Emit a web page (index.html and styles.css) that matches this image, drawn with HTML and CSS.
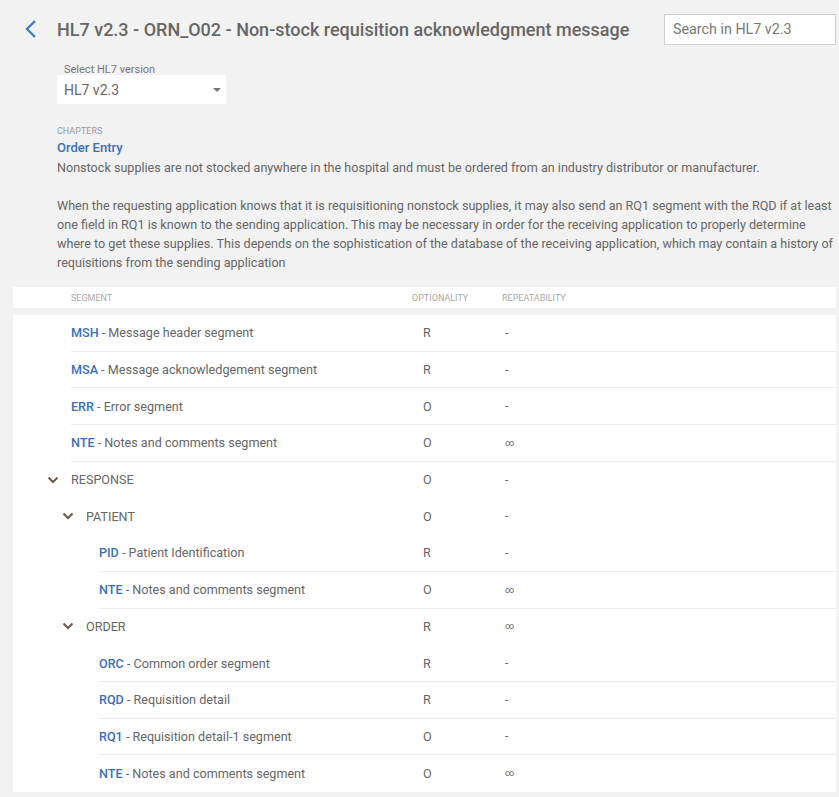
FILE: index.html
```html
<!DOCTYPE html>
<html>
<head>
<meta charset="utf-8">
<link rel="stylesheet" href="styles.css">
</head>
<body>
<header class="top">
  <a class="back" href="#"><svg width="14" height="20" viewBox="0 0 14 20"><path d="M11 2 L3 10 L11 18" fill="none" stroke="#3f7ec6" stroke-width="2.4"/></svg></a>
  <h1 class="title">HL7 v2.3 - ORN_O02 - Non-stock requisition acknowledgment message</h1>
  <input class="search" type="text" placeholder="Search in HL7 v2.3">
</header>

<div class="version">
  <div class="version-label">Select HL7 version</div>
  <div class="select"><span>HL7 v2.3</span><span class="caret"></span></div>
</div>

<section class="chapter">
  <div class="chapter-label">Chapters</div>
  <div class="chapter-name">Order Entry</div>
  <p class="desc">Nonstock supplies are not stocked anywhere in the hospital and must be ordered from an industry distributor or manufacturer.</p>
  <p class="desc">When the requesting application knows that it is requisitioning nonstock supplies, it may also send an RQ1 segment with the RQD if at least one field in RQ1 is known to the sending application. This may be necessary in order for the receiving application to properly determine where to get these supplies. This depends on the sophistication of the database of the receiving application, which may contain a history of requisitions from the sending application</p>
</section>

<div class="thead">
  <div class="th th-seg">Segment</div>
  <div class="th th-opt">Optionality</div>
  <div class="th th-rep">Repeatability</div>
</div>

<div class="tbody">
  <div class="row seg l0"><div class="name"><b>MSH</b> - Message header segment</div><div class="opt">R</div><div class="rep">-</div></div>
  <div class="row seg l0"><div class="name"><b>MSA</b> - Message acknowledgement segment</div><div class="opt">R</div><div class="rep">-</div></div>
  <div class="row seg l0"><div class="name"><b>ERR</b> - Error segment</div><div class="opt">O</div><div class="rep">-</div></div>
  <div class="row seg l0"><div class="name"><b>NTE</b> - Notes and comments segment</div><div class="opt">O</div><div class="rep inf">∞</div></div>
  <div class="row grp g0"><div class="name"><svg class="chev" width="12" height="8" viewBox="0 0 12 8"><path d="M1.5 1.5 L6 6 L10.5 1.5" fill="none" stroke="#6b5a4a" stroke-width="2"/></svg>RESPONSE</div><div class="opt">O</div><div class="rep">-</div></div>
  <div class="row grp g1"><div class="name"><svg class="chev" width="12" height="8" viewBox="0 0 12 8"><path d="M1.5 1.5 L6 6 L10.5 1.5" fill="none" stroke="#6b5a4a" stroke-width="2"/></svg>PATIENT</div><div class="opt">O</div><div class="rep">-</div></div>
  <div class="row seg l2"><div class="name"><b>PID</b> - Patient Identification</div><div class="opt">R</div><div class="rep">-</div></div>
  <div class="row seg l2"><div class="name"><b>NTE</b> - Notes and comments segment</div><div class="opt">O</div><div class="rep inf">∞</div></div>
  <div class="row grp g1"><div class="name"><svg class="chev" width="12" height="8" viewBox="0 0 12 8"><path d="M1.5 1.5 L6 6 L10.5 1.5" fill="none" stroke="#6b5a4a" stroke-width="2"/></svg>ORDER</div><div class="opt">R</div><div class="rep inf">∞</div></div>
  <div class="row seg l2"><div class="name"><b>ORC</b> - Common order segment</div><div class="opt">R</div><div class="rep">-</div></div>
  <div class="row seg l2"><div class="name"><b>RQD</b> - Requisition detail</div><div class="opt">R</div><div class="rep">-</div></div>
  <div class="row seg l2"><div class="name"><b>RQ1</b> - Requisition detail-1 segment</div><div class="opt">O</div><div class="rep">-</div></div>
  <div class="row seg l2 last"><div class="name"><b>NTE</b> - Notes and comments segment</div><div class="opt">O</div><div class="rep inf">∞</div></div>
</div>
</body>
</html>
```

FILE: styles.css
```css
html, body {
  margin: 0;
  padding: 0;
  background: #f2f2f2;
  font-family: Roboto, "Liberation Sans", sans-serif;
  color: #666;
}

.top {
  display: flex;
  align-items: center;
  height: 58px;
  padding: 0 3px 0 24px;
}

.back {
  display: flex;
  width: 33px;
  height: 20px;
  align-items: center;
}

.title {
  flex: 1;
  margin: 0;
  font-size: 18px;
  font-weight: 500;
  color: #666;
}

.search {
  box-sizing: border-box;
  width: 172px;
  height: 31px;
  border: 1px solid #cfcfcf;
  background: #fff;
  padding: 0 8px;
  font-family: Roboto, "Liberation Sans", sans-serif;
  font-size: 14.3px;
  color: #666;
  outline: none;
}

.search::placeholder {
  color: #777;
}

.version {
  margin-left: 57px;
  margin-top: 6px;
}

.version-label {
  padding-left: 7px;
  font-size: 11px;
  line-height: 11px;
  color: #777;
}

.select {
  box-sizing: border-box;
  width: 169px;
  height: 29px;
  background: #fff;
  display: flex;
  align-items: center;
  justify-content: space-between;
  padding: 0 5px 0 7px;
  font-size: 14px;
  color: #666;
}

.caret {
  width: 0;
  height: 0;
  border-left: 4px solid transparent;
  border-right: 4px solid transparent;
  border-top: 4px solid #757575;
  margin-top: 1px;
}

.chapter {
  margin: 21px 2px 0 57px;
}

.chapter-label {
  font-size: 9px;
  line-height: 12px;
  text-transform: uppercase;
  color: #999;
}

.chapter-name {
  font-size: 13px;
  font-weight: 500;
  line-height: 21px;
  color: #3b70b5;
}

.desc {
  margin: 0 0 19px 0;
  font-size: 12.6px;
  line-height: 19px;
  color: #666;
}

.desc:last-child {
  margin-bottom: 0;
}

.thead {
  display: grid;
  grid-template-columns: 399px 90px 1fr;
  height: 21px;
  align-items: center;
  margin: 15px 3px 0 13px;
  background: #fff;
  font-size: 9px;
  text-transform: uppercase;
  color: #a9a9a9;
}

.th-seg {
  padding-left: 58px;
}

.tbody {
  margin: 7px 3px 0 13px;
  background: #fff;
}

.row {
  display: grid;
  grid-template-rows: 35.7px;
  align-items: center;
  font-size: 12.6px;
  color: #666;
}

.row.seg {
  border-bottom: 1px solid #ececec;
}

.row.grp {
  height: 36.7px;
}

.row.last {
  border-bottom: none;
  height: 37px;
}

.row.l0 {
  margin-left: 58px;
  grid-template-columns: 341px 90px 1fr;
}

.row.l2 {
  margin-left: 86px;
  grid-template-columns: 313px 90px 1fr;
}

.row.g0 {
  margin-left: 34px;
  grid-template-columns: 365px 90px 1fr;
}

.row.g1 {
  margin-left: 49px;
  grid-template-columns: 350px 90px 1fr;
}

.name b {
  font-weight: 500;
  color: #3b70b5;
}

.name {
  display: flex;
  align-items: center;
  white-space: pre;
}

.chev {
  margin-right: 12px;
}

.opt {
  padding-left: 11px;
}

.rep {
  padding-left: 3px;
  font-size: 12px;
}

.rep.inf {
  font-size: 9px;
}
```
